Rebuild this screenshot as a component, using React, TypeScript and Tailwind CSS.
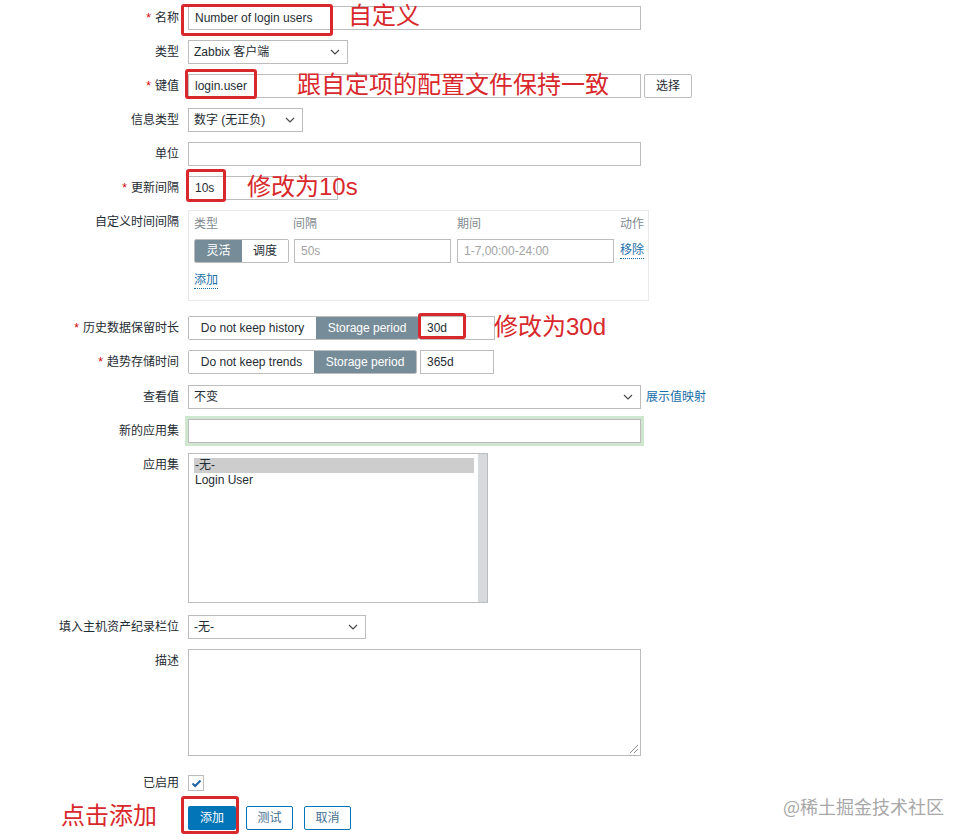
import React from 'react';

const Chevron = () => (
    <svg width="10" height="6" viewBox="0 0 10 6" className="shrink-0">
        <polyline points="1,1 5,5 9,1" fill="none" stroke="#4a4a4a" strokeWidth="1.2"/>
    </svg>
);

const Row: React.FC<{label: string; req?: boolean; mt?: string; children: React.ReactNode}> = ({label, req, mt = 'mt-[10px]', children}) => (
    <div className={`flex items-start ${mt}`}>
        <div className="w-[179px] shrink-0 text-right text-[12px] leading-[24px] text-[#1f2c33]">
            {req && <span className="text-[#d40000] mr-[4px]">*</span>}
            {label}
        </div>
        <div className="ml-[9px] flex items-start">{children}</div>
    </div>
);

const Input: React.FC<{w: string; value?: string; placeholder?: string}> = ({w, value, placeholder}) => (
    <div className={`${w} h-[24px] border border-[#bcbcbc] bg-white px-[6px] text-[12px] leading-[22px] text-[#1f2c33] whitespace-nowrap overflow-hidden`}>
        {value ?? <span className="text-[#a3a3a3]">{placeholder}</span>}
    </div>
);

const Select: React.FC<{w: string; value: string}> = ({w, value}) => (
    <div className={`${w} h-[24px] border border-[#bcbcbc] bg-white pl-[5px] pr-[7px] flex items-center justify-between text-[12px] text-[#1f2c33]`}>
        <span>{value}</span>
        <Chevron/>
    </div>
);

const Segment: React.FC<{items: {label: string; w: string; active?: boolean}[]}> = ({items}) => (
    <div className="flex shrink-0 h-[24px] border border-[#bcbcbc] rounded-[2px] overflow-hidden">
        {items.map(it => (
            <div key={it.label}
                 className={`${it.w} h-full flex items-center justify-center whitespace-nowrap text-[12px] ${it.active ? 'bg-[#768d99] text-white' : 'bg-white text-[#1f2c33]'}`}>
                {it.label}
            </div>
        ))}
    </div>
);

const RedBox: React.FC<{cls: string}> = ({cls}) => (
    <div className={`absolute border-[3px] border-[#d8282c] rounded-[3px] ${cls}`}/>
);

const Note: React.FC<{cls: string; text: string}> = ({cls, text}) => (
    <div className={`absolute text-[24px] leading-[24px] text-[#d8282c] whitespace-nowrap ${cls}`}>{text}</div>
);

export default function App() {
    return (
        <div className="relative w-[966px] h-[840px] bg-white overflow-hidden font-['Liberation_Sans','Noto_Sans_CJK_SC',sans-serif]">
            <div className="pt-[6px]">
                <Row label="名称" req mt="mt-0">
                    <Input w="w-[453px]" value="Number of login users"/>
                </Row>
                <Row label="类型">
                    <Select w="w-[160px]" value="Zabbix 客户端"/>
                </Row>
                <Row label="键值" req>
                    <Input w="w-[453px]" value="login.user"/>
                    <div className="ml-[3px] w-[48px] h-[24px] border border-[#bcbcbc] rounded-[2px] bg-white flex items-center justify-center text-[12px] text-[#1f2c33]">选择</div>
                </Row>
                <Row label="信息类型">
                    <Select w="w-[115px]" value="数字 (无正负)"/>
                </Row>
                <Row label="单位">
                    <Input w="w-[453px]" value=""/>
                </Row>
                <Row label="更新间隔" req>
                    <Input w="w-[150px]" value="10s"/>
                </Row>
                <Row label="自定义时间间隔">
                    <div className="w-[461px] h-[91px] border border-[#e6e9eb] pl-[5px] pr-[2px] pt-[5px]">
                        <div className="flex text-[12px] leading-[16px] text-[#7f8a90] whitespace-nowrap">
                            <div className="w-[99px] shrink-0">类型</div>
                            <div className="w-[164px] shrink-0">间隔</div>
                            <div className="w-[163px] shrink-0">期间</div>
                            <div className="shrink-0">动作</div>
                        </div>
                        <div className="flex items-center mt-[7px]">
                            <Segment items={[{label: '灵活', w: 'w-[47px]', active: true}, {label: '调度', w: 'w-[46px]'}]}/>
                            <div className="ml-[5px] shrink-0"><Input w="w-[157px]" placeholder="50s"/></div>
                            <div className="ml-[6px] shrink-0"><Input w="w-[157px]" placeholder="1-7,00:00-24:00"/></div>
                            <div className="ml-[6px] shrink-0 whitespace-nowrap text-[12px] text-[#1b6ea8] border-b border-dotted border-[#1b6ea8] leading-[15px]">移除</div>
                        </div>
                        <div className="mt-[10px] flex">
                            <div className="text-[12px] text-[#1b6ea8] border-b border-dotted border-[#1b6ea8] leading-[15px]">添加</div>
                        </div>
                    </div>
                </Row>
                <Row label="历史数据保留时长" req mt="mt-[15px]">
                    <Segment items={[{label: 'Do not keep history', w: 'w-[127px]'}, {label: 'Storage period', w: 'w-[102px]', active: true}]}/>
                    <div className="ml-[1px]"><Input w="w-[75px]" value="30d"/></div>
                </Row>
                <Row label="趋势存储时间" req>
                    <Segment items={[{label: 'Do not keep trends', w: 'w-[125px]'}, {label: 'Storage period', w: 'w-[102px]', active: true}]}/>
                    <div className="ml-[3px]"><Input w="w-[74px]" value="365d"/></div>
                </Row>
                <Row label="查看值" mt="mt-[11px]">
                    <Select w="w-[453px]" value="不变"/>
                    <div className="ml-[5px] text-[12px] leading-[24px] text-[#1b6ea8]">展示值映射</div>
                </Row>
                <Row label="新的应用集">
                    <div className="shadow-[0_0_0_3px_#cfe6cf]">
                        <Input w="w-[453px]" value=""/>
                    </div>
                </Row>
                <Row label="应用集">
                    <div className="w-[300px] h-[150px] border border-[#bcbcbc] bg-white flex">
                        <div className="flex-1 pl-[5px] pt-[4px] pr-[4px] text-[12px] leading-[15px] text-[#1f2c33]">
                            <div className="bg-[#cdcdcd] pl-[1px]">-无-</div>
                            <div className="pl-[1px]">Login User</div>
                        </div>
                        <div className="w-[9px] h-full bg-[#d6dadd]"/>
                    </div>
                </Row>
                <Row label="填入主机资产纪录栏位" mt="mt-[12px]">
                    <Select w="w-[178px]" value="-无-"/>
                </Row>
                <Row label="描述">
                    <div className="relative w-[453px] h-[107px] border border-[#bcbcbc] bg-white">
                        <svg width="10" height="10" viewBox="0 0 10 10" className="absolute right-[1px] bottom-[1px]">
                            <line x1="1" y1="9" x2="9" y2="1" stroke="#8a8a8a" strokeWidth="1"/>
                            <line x1="5" y1="9" x2="9" y2="5" stroke="#8a8a8a" strokeWidth="1"/>
                        </svg>
                    </div>
                </Row>
                <Row label="已启用" mt="mt-[15px]">
                    <div className="h-[24px] flex items-center">
                        <div className="w-[16px] h-[16px] border border-[#bcbcbc] bg-white flex items-center justify-center">
                            <svg width="11" height="9" viewBox="0 0 11 9">
                                <polyline points="1.5,4.5 4.2,7 9.5,1.5" fill="none" stroke="#1f65a6" strokeWidth="2"/>
                            </svg>
                        </div>
                    </div>
                </Row>
                <div className="flex mt-[11px] pl-[188px] gap-[10px]">
                    <div className="w-[48px] h-[24px] rounded-[2px] bg-[#0275b8] text-white text-[12px] flex items-center justify-center">添加</div>
                    <div className="w-[47px] h-[24px] rounded-[2px] border border-[#0275b8] bg-white text-[#3f6f93] text-[12px] flex items-center justify-center">测试</div>
                    <div className="w-[47px] h-[24px] rounded-[2px] border border-[#0275b8] bg-white text-[#3f6f93] text-[12px] flex items-center justify-center ml-[1px]">取消</div>
                </div>
            </div>

            <RedBox cls="left-[181px] top-[4px] w-[152px] h-[32px]"/>
            <RedBox cls="left-[185px] top-[69px] w-[72px] h-[30px]"/>
            <RedBox cls="left-[186px] top-[169px] w-[40px] h-[33px]"/>
            <RedBox cls="left-[418px] top-[313px] w-[48px] h-[26px]"/>
            <RedBox cls="left-[181px] top-[796px] w-[58px] h-[38px]"/>

            <Note cls="left-[348px] top-[4px]" text="自定义"/>
            <Note cls="left-[297px] top-[73px]" text="跟自定项的配置文件保持一致"/>
            <Note cls="left-[247px] top-[175px]" text="修改为10s"/>
            <Note cls="left-[494px] top-[315px]" text="修改为30d"/>
            <Note cls="left-[61px] top-[804px]" text="点击添加"/>

            <div className="absolute left-[783px] top-[796px] text-[18px] leading-[20px] text-[#a8a8a8] font-['Noto_Sans_CJK_SC',sans-serif]">@稀土掘金技术社区</div>
        </div>
    );
}
